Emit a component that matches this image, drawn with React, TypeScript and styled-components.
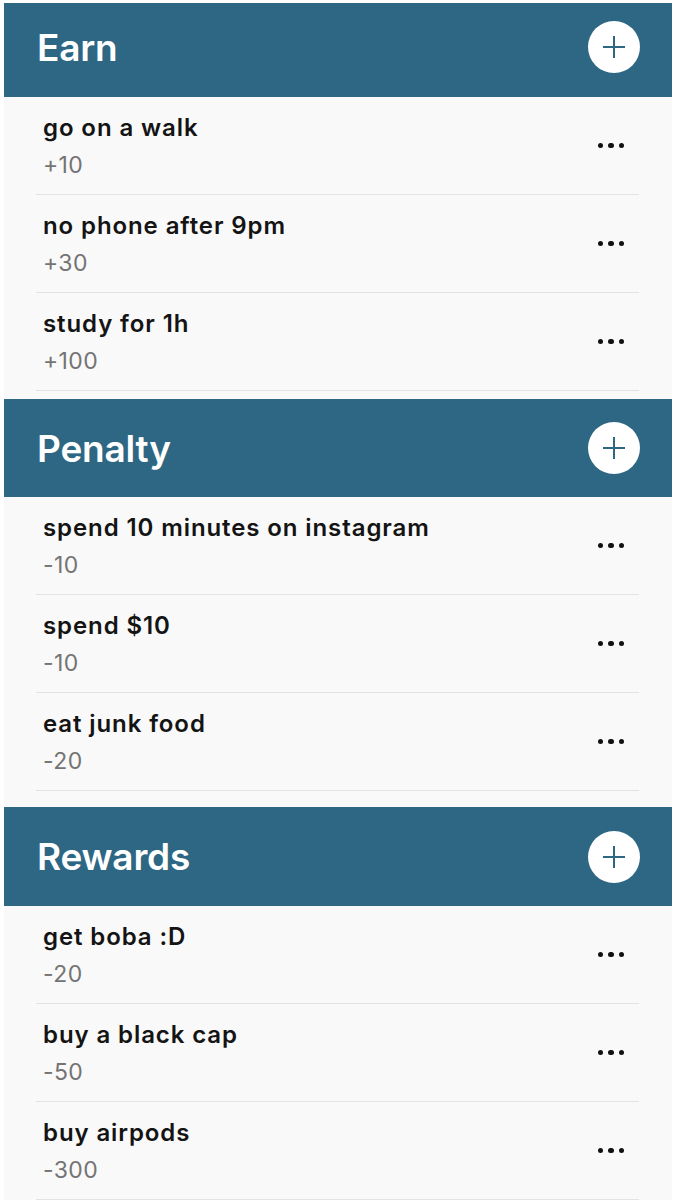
import React from 'react'
import styled, { createGlobalStyle } from 'styled-components'

const GlobalStyle = createGlobalStyle`
  body {
    margin: 0;
    background: #ffffff;
    font-family: 'Inter', 'Noto Sans', sans-serif;
  }
`

const Page = styled.div`
  width: 675px;
  height: 1200px;
  overflow: hidden;
  padding: 3px 3px 0 4px;
  box-sizing: border-box;
`
const Screen = styled.div`
  background: #f9f9f9;
  height: 100%;
`
const Section = styled.section<{ $gap: number }>`
  padding-bottom: ${(p) => p.$gap}px;
`
const Header = styled.div<{ $height: number; $lift: number }>`
  height: ${(p) => p.$height}px;
  box-sizing: border-box;
  background: #2e6784;
  display: flex;
  align-items: center;
  justify-content: space-between;
  padding: 0 32px ${(p) => p.$lift}px 33px;
`
const Titulo = styled.h1`
  margin: 0;
  color: #ffffff;
  font-size: 37px;
  font-weight: 600;
  letter-spacing: -0.2px;
`
const BotaoMais = styled.button`
  width: 52px;
  height: 52px;
  border-radius: 50%;
  border: none;
  background: #ffffff;
  padding: 0;
  display: flex;
  align-items: center;
  justify-content: center;
`
const Item = styled.div`
  height: 97px;
  margin: 0 33px 0 32px;
  padding-left: 7px;
  border-bottom: 1px solid #e3e3e3;
  display: flex;
  align-items: center;
  justify-content: space-between;
`
const Textos = styled.div`
  display: flex;
  flex-direction: column;
  margin-top: 1px;
`
const Nome = styled.span`
  font-size: 24px;
  font-weight: 600;
  line-height: 36px;
  letter-spacing: 0.9px;
  color: #141414;
`
const Pontos = styled.span`
  font-size: 23px;
  font-weight: 400;
  line-height: 36px;
  letter-spacing: 0.4px;
  margin-top: 1px;
  color: #747474;
`
const Pontinhos = styled.div`
  display: flex;
  gap: 5px;
  margin-right: 15px;
`
const Pontinho = styled.span`
  width: 5.5px;
  height: 5.5px;
  border-radius: 50%;
  background: #111111;
`

type Tarefa = { nome: string; pontos: string }

const secoes: { titulo: string; altura: number; lift: number; gap: number; itens: Tarefa[] }[] = [
  {
    titulo: 'Earn',
    altura: 94,
    lift: 6,
    gap: 8,
    itens: [
      { nome: 'go on a walk', pontos: '+10' },
      { nome: 'no phone after 9pm', pontos: '+30' },
      { nome: 'study for 1h', pontos: '+100' },
    ],
  },
  {
    titulo: 'Penalty',
    altura: 98,
    lift: 0,
    gap: 16,
    itens: [
      { nome: 'spend 10 minutes on instagram', pontos: '-10' },
      { nome: 'spend $10', pontos: '-10' },
      { nome: 'eat junk food', pontos: '-20' },
    ],
  },
  {
    titulo: 'Rewards',
    altura: 99,
    lift: 0,
    gap: 0,
    itens: [
      { nome: 'get boba :D', pontos: '-20' },
      { nome: 'buy a black cap', pontos: '-50' },
      { nome: 'buy airpods', pontos: '-300' },
    ],
  },
]

const IconeMais = () => (
  <svg width="26" height="26" viewBox="0 0 26 26">
    <path d="M13 2v22M2 13h22" stroke="#2e6784" strokeWidth="2" fill="none" />
  </svg>
)

const App: React.FC = () => {
  return (
    <Page>
      <GlobalStyle />
      <Screen>
        {secoes.map((secao) => (
          <Section key={secao.titulo} $gap={secao.gap}>
            <Header $height={secao.altura} $lift={secao.lift}>
              <Titulo>{secao.titulo}</Titulo>
              <BotaoMais aria-label={`add-${secao.titulo}`}>
                <IconeMais />
              </BotaoMais>
            </Header>
            {secao.itens.map((item) => (
              <Item key={item.nome}>
                <Textos>
                  <Nome>{item.nome}</Nome>
                  <Pontos>{item.pontos}</Pontos>
                </Textos>
                <Pontinhos>
                  <Pontinho />
                  <Pontinho />
                  <Pontinho />
                </Pontinhos>
              </Item>
            ))}
          </Section>
        ))}
      </Screen>
    </Page>
  )
}
export default App
